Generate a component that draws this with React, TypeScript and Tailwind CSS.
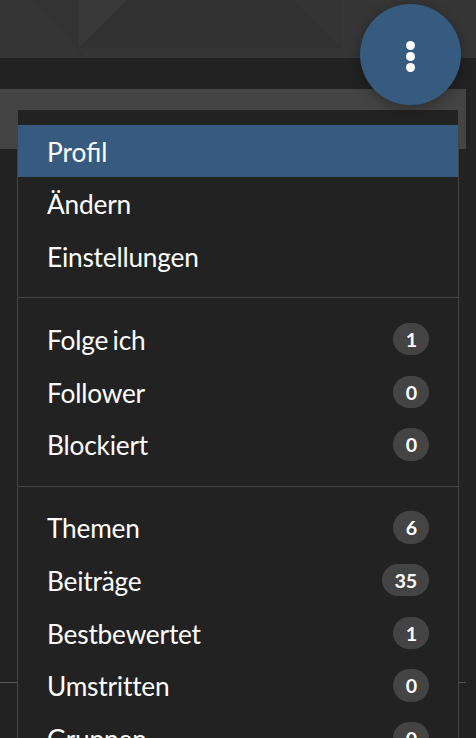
type Item = { label: string; count?: number };

const groups: Item[][] = [
  [{ label: "Profil" }, { label: "Ändern" }, { label: "Einstellungen" }],
  [
    { label: "Folge ich", count: 1 },
    { label: "Follower", count: 0 },
    { label: "Blockiert", count: 0 },
  ],
  [
    { label: "Themen", count: 6 },
    { label: "Beiträge", count: 35 },
    { label: "Bestbewertet", count: 1 },
    { label: "Umstritten", count: 0 },
    { label: "Gruppen", count: 0 },
  ],
];

function Row({ item, active }: { item: Item; active: boolean }) {
  return (
    <li
      className={`flex justify-between px-[29px] pt-[9px] text-[26.25px] leading-[37.5px] text-white ${
        item.count === undefined ? "h-[52.5px]" : "h-[52.65px]"
      } ${active ? "bg-[#375a7f]" : "tracking-[-0.2px] [word-spacing:-2px]"}`}
    >
      <span>{item.label}</span>
      {item.count !== undefined && (
        <span className="mt-[1px] h-[32.5px] rounded-full bg-[#444] pr-[11.75px] pl-[12.75px] text-[19.7px] leading-[33px] font-bold tracking-normal">
          {item.count}
        </span>
      )}
    </li>
  );
}

function Cover() {
  return (
    <svg className="block h-[58px] w-full" viewBox="0 0 476 58" preserveAspectRatio="none">
      <rect width="476" height="58" fill="#353535" />
      <path d="M30 0H78V48Z" fill="#333333" />
      <path d="M78 0H127L79 47Z" fill="#383838" />
      <path d="M127 0H293L341 48H79Z" fill="#323232" />
      <path d="M293 0H342V48Z" fill="#343434" />
      <path d="M342 0H476V48H342Z" fill="#363636" />
      <path d="M0 48H476V58H0Z" fill="#363636" />
      <path d="M79 48L87 58H79Z" fill="#333333" />
    </svg>
  );
}

export default function App() {
  return (
    <div className="relative h-[738px] w-[476px] overflow-hidden bg-[#222] font-['Lato','Liberation_Sans',sans-serif]">
      <Cover />
      <div className="mt-[31px] h-[60px] w-[466px] bg-[#444]" />
      <div className="mt-[533px] h-px w-[466px] bg-[#555]" />

      <ul className="absolute top-[109px] left-[17px] w-[442px] border border-[#444] bg-[#222] pt-[14.9px]">
        {groups.map((group, g) => (
          <li key={g}>
            {g > 0 && <div className="my-[14.75px] h-px bg-[#444]" />}
            <ul>
              {group.map((item) => (
                <Row key={item.label} item={item} active={item.label === "Profil"} />
              ))}
            </ul>
          </li>
        ))}
      </ul>

      <button
        aria-label="Menü"
        className="absolute top-[4px] left-[360px] flex size-[101px] flex-col items-center justify-center gap-[2.25px] rounded-full bg-[#375a7f] pt-[4px] shadow-[0_3px_14px_rgba(0,0,0,0.35)]"
      >
        <span className="size-[9px] rounded-full bg-white" />
        <span className="size-[9px] rounded-full bg-white" />
        <span className="size-[9px] rounded-full bg-white" />
      </button>
    </div>
  );
}
